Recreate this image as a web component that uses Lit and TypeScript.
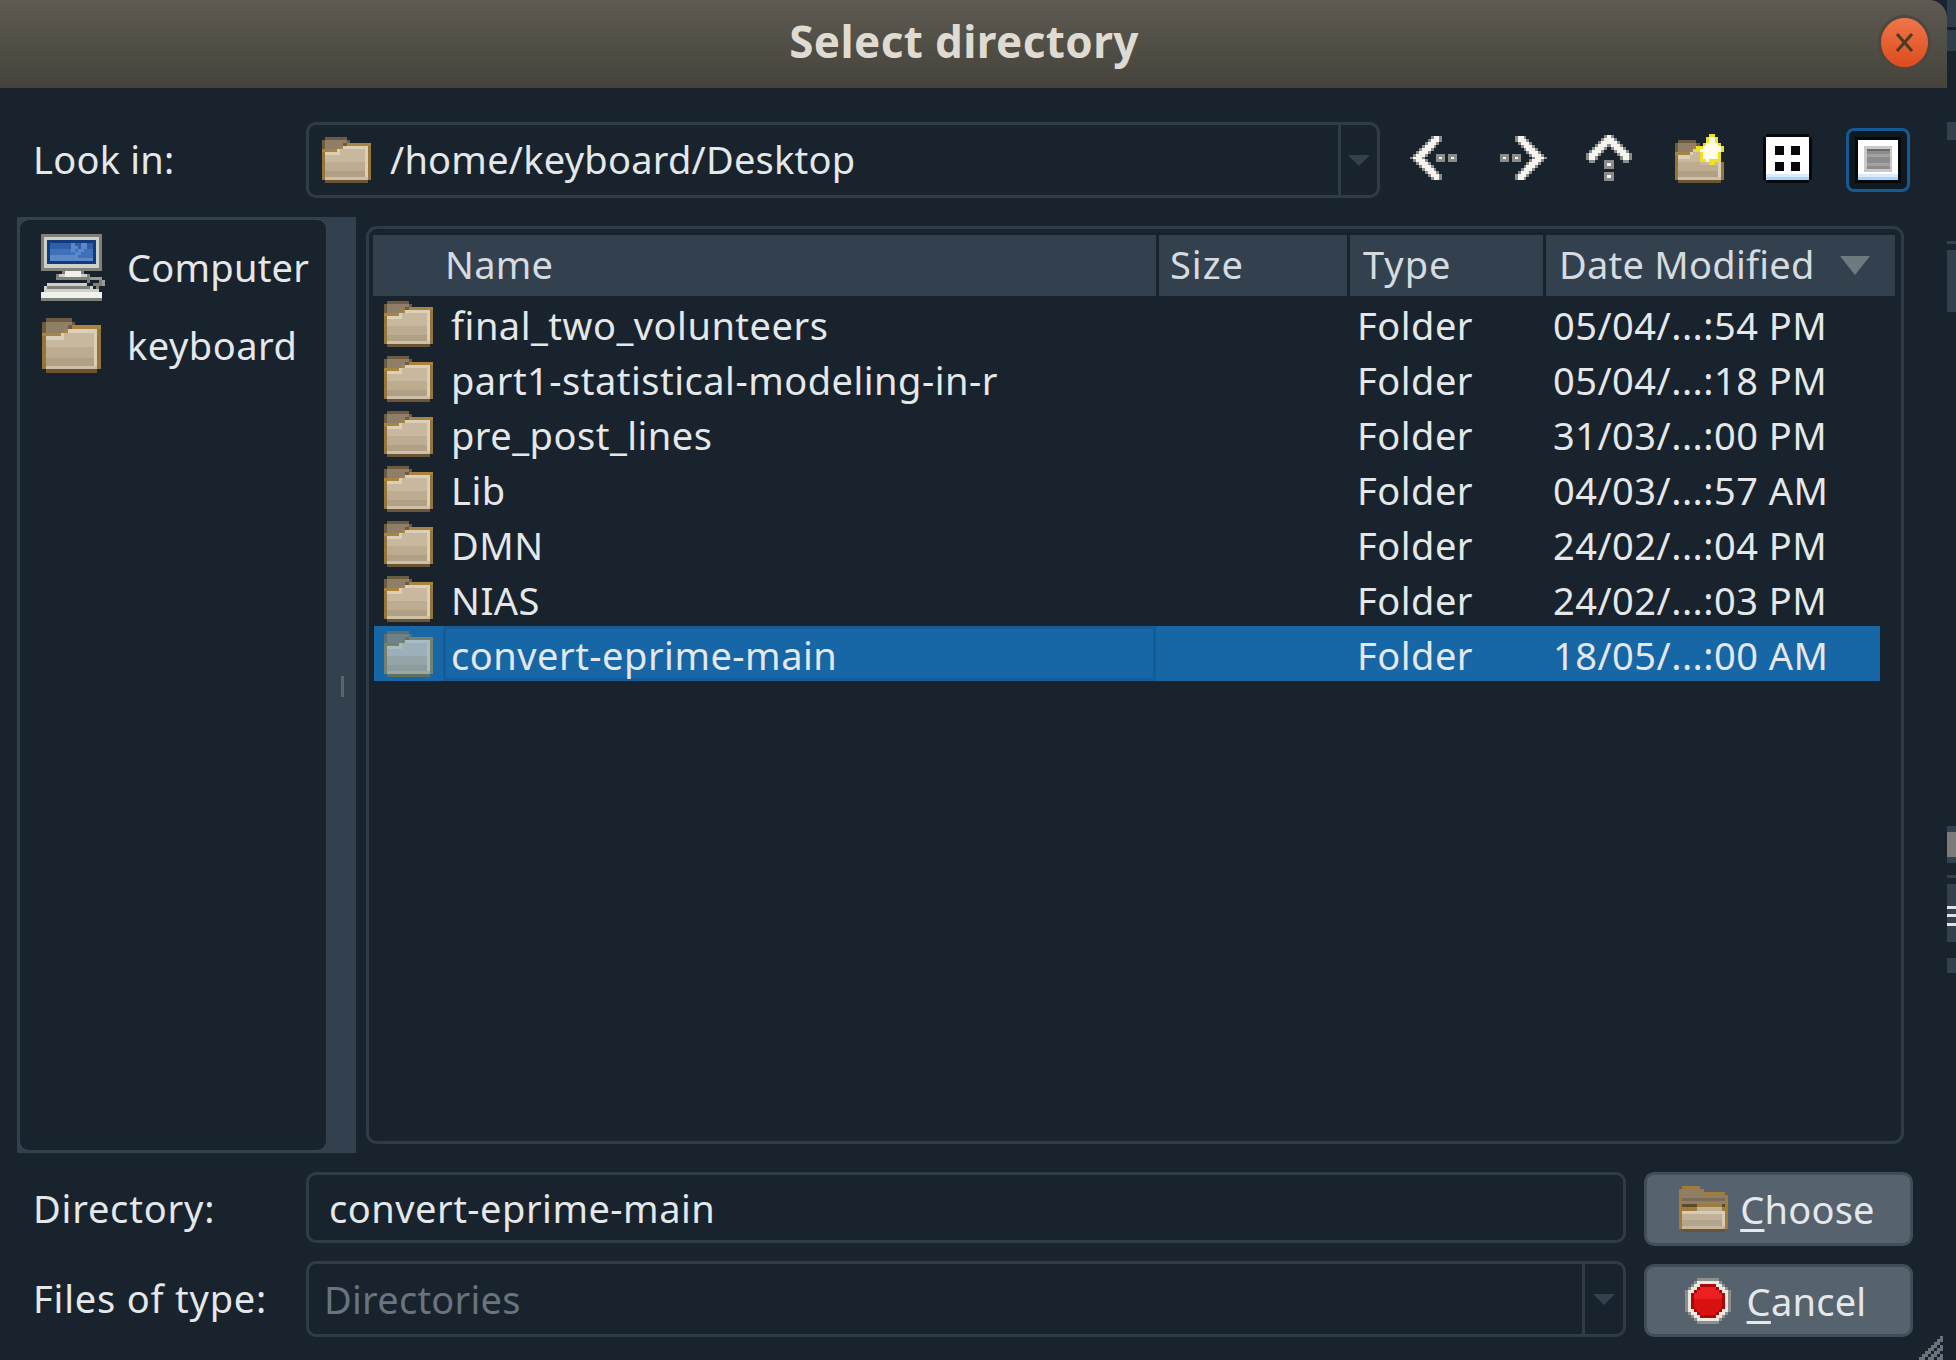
import { LitElement, html, svg, css } from 'lit';
import { customElement } from 'lit/decorators.js';

type Palette = Record<string, string>;

// small helper: the reference icons are low-res bitmaps, so draw them from char maps
function pixels(rows: string[], pal: Palette, w: number, h: number) {
   const cols = Math.max(...rows.map((r) => r.length));
   const rects: unknown[] = [];
   rows.forEach((row, y) => {
      let x = 0;
      while (x < row.length) {
         const c = row[x];
         let end = x + 1;
         while (end < row.length && row[end] === c) end++;
         if (pal[c]) {
            rects.push(svg`<rect x=${x} y=${y} width=${end - x} height="1" fill=${pal[c]}></rect>`);
         }
         x = end;
      }
   });
   return html`<svg class="icon" width=${w} height=${h} viewBox="0 0 ${cols} ${rows.length}" shape-rendering="crispEdges">${rects}</svg>`;
}

const FOLDER = [
   '.aaaaaaa........',
   'abbbbbbba.......',
   'abbbbbbacccccccc',
   'abbbbbcddddddddj',
   'cccccdeeeeeeeedj',
   'jdddddeeeeeeeedj',
   'jeeeeeeeeeeeeedj',
   'jeeeeeeeeeeeeedj',
   'jfffffffffffffdj',
   'jfffffffffffffdj',
   'jfffffffffffffdj',
   'jgggggggggggggdj',
   'jgggggggggggggdj',
   'jhhhhhhhhhhhhhhj',
   '.kkkkkkkkkkkkkk.',
];
const FOLDER_PAL: Palette = {
   a: '#6e5c40', b: '#8f7f68', c: '#a8843f', d: '#dbcfba', e: '#c8b89d', f: '#bdac90',
   g: '#b1a083', h: '#cdc0aa', j: '#94763a', k: '#6b5533',
};
const FOLDER_SEL: Palette = {
   a: '#5a7078', b: '#6f8288', c: '#76806e', d: '#a8bcc5', e: '#9db0b8', f: '#93a5a9',
   g: '#8c9c9c', h: '#9aa8a8', j: '#76806e', k: '#60705f',
};

const FOLDER_OPEN = [
   '.cccccc.........',
   'cbbbbbbc........',
   'cbbbbbbbccccccc.',
   'cbbbbbbbbbbbbbbc',
   'cmmmmmmmmmmmmmmc',
   'cbbbbbbbbbbbbbbc',
   'cnnnnnccccccccnc',
   'cccccceeeeeeeecc',
   'cddddddddddddddc',
   'ceeeeeeeeeeeeedc',
   'ceeeeeeeeeeeeedc',
   'cfffffffffffffdc',
   'cfffffffffffffdc',
   'chhhhhhhhhhhhhhc',
   '.kkkkkkkkkkkkkk.',
];
const OPEN_PAL: Palette = {
   b: '#8f7f68', m: '#7a6b52', n: '#5c4a2e', c: '#a07c3a', d: '#d8ccb8', e: '#c0b198', f: '#b3a58c',
   h: '#c4b8a2', k: '#6b5533',
};

const COMPUTER = [
   'kkkkkkkkkkkkkkkkkkkk.',
   'kssssssssssssssssssk.',
   'ksnnnnnnnnnnnnnnnnsk.',
   'ksnbbbbbbblbbllbbnsk.',
   'ksnbbbbbbbllbllbbnsk.',
   'ksnmmmmmmmlmllmmmnsk.',
   'ksnmmmmmmmmllmmmmnsk.',
   'ksnlllllllllmmmmmnsk.',
   'ksnllllllllllllllnsk.',
   'ksnnnnnnnnnnnnnnnnsk.',
   'kssssssssssssssssssk.',
   'kkkkkkkkkkkkkkkkkkkk.',
   '.......kwwwwwk.......',
   '.....ksswwwwwssk.....',
   '.....kkkkkkkkkkkoooo.',
   '...............k...ko',
   '..sssssssssssss..kkko',
   '.skkkkkkkkkkkkkks.k..',
   '.ssssssssssssssssss..',
   'wwwwwwwwwwwwwwwwwwww.',
   'wwwwwwwwwwwwwwwwwwww.',
   'kkkkkkkkkkkkkkkkkkkk.',
];
const COMPUTER_PAL: Palette = {
   k: '#80807a', s: '#d0d0ca', n: '#123a7c', b: '#2f5fa8', m: '#3f70b8', l: '#5a88c8',
   w: '#f0f0ec', o: '#9a9a94',
};

const BACK = [
   '.......gwwg.....',
   '......gwwwg.....',
   '.....gwwwg......',
   '....gwwwg.......',
   '...gwwwg........',
   '..gwwwg.........',
   '.gwwwg...ggg.ggg',
   'gwwwg....gwg.gwg',
   '.gwwwg...ggg.ggg',
   '..gwwwg.........',
   '...gwwwg........',
   '....gwwwg.......',
   '.....gwwwg......',
   '......gwwwg.....',
   '.......gwwg.....',
];
const FORWARD = BACK.map((r) => r.split('').reverse().join(''));
const UP = [
   '......gwg......',
   '.....gwwwg.....',
   '....gwwwwwg....',
   '...gwwwgwwwg...',
   '..gwwwg.gwwwg..',
   '.gwwwg...gwwwg.',
   'gwwwg.....gwwwg',
   'gwwg.......gwwg',
   '.gg...ggg...gg.',
   '......gwg......',
   '......ggg......',
   '...............',
   '......ggg......',
   '......gwg......',
   '......ggg......',
];
const ARROW_PAL: Palette = { w: '#f6f4ef', g: '#8b8c8a' };

const NEW_FOLDER = [
   '...........yy...',
   '..........yWWy..',
   '.aaaaaa...yWWy..',
   'abbbbbba.yWWWWy.',
   'abbbbbcyyWWWWWWy',
   'abbbbcdyWWWWWWWy',
   'cccccdeeyWWWWWy.',
   'jddddeeeyWWWWWy.',
   'jeeeeeeeyyWyyyy.',
   'jfffffffeeeyyedj',
   'jfffffffffffffdj',
   'jfffffffffffffdj',
   'jgggggggggggggdj',
   'jgggggggggggggdj',
   'jhhhhhhhhhhhhhhj',
   '.kkkkkkkkkkkkkk.',
];
const NEW_PAL: Palette = { ...FOLDER_PAL, y: '#f2df22', W: '#fffde8' };

const GRID_VIEW = [
   '.KKKKKKKKKKKKKK.',
   'KWWWWWWWWWWWWWWK',
   'KWWWWWWWWWWWWWWK',
   'KWWWWWWWWWWWWWWK',
   'KWWWKKKWWKKKWWWK',
   'KWWWKKKWWKKKWWWK',
   'KWWWKKKWWKKKWWWK',
   'KWWWWWWWWWWWWWWK',
   'KWWWWWWWWWWWWWWK',
   'KWWWKKKWWKKKWWWK',
   'KWWWKKKWWKKKWWWK',
   'KWWWKKKWWKKKWWWK',
   'KWWWWWWWWWWWWWWK',
   'KbbbbbbbbbbbbbbK',
   'KBBBBBBBBBBBBBBK',
   '.KKKKKKKKKKKKKK.',
];
const VIEW_PAL: Palette = {
   K: '#06090c', W: '#ffffff', b: '#d9ecfd', B: '#a9d5fb', g: '#c9c9c9', p: '#6a6a6a', q: '#8c8c8c', r: '#a2a2a2',
};
const DETAIL_VIEW = [
   'KKKKKKKKKKKKKKKK',
   'KWWWWWWWWWWWWWWK',
   'KWWWWWWWWWWWWWWK',
   'KWWggggggggggWWK',
   'KWWgppppppppgWWK',
   'KWWgqqqqqqqqgWWK',
   'KWWgrrrrrrrrgWWK',
   'KWWgqqqqqqqqgWWK',
   'KWWgqqqqqqqqgWWK',
   'KWWgrrrrrrrrgWWK',
   'KWWgqqqqqqqqgWWK',
   'KWWggggggggggWWK',
   'KWWWWWWWWWWWWWWK',
   'KbbbbbbbbbbbbbbK',
   'KBBBBBBBBBBBBBBK',
   'KKKKKKKKKKKKKKKK',
];

const STOP = [
   '....ggggggg....',
   '...gwwwwwwwg...',
   '..gwwdddddwwg..',
   '.gwwdRRRRRdwwg.',
   'gwwdRRRRRRRdwwg',
   'gwdRRRRRRRRRdwg',
   'gwdRRRRRRRRRdwg',
   'gwdrrrrrrrrrdwg',
   'gwdrrrrrrrrrdwg',
   'gwdrrrrrrrrrdwg',
   'gwwdrrrrrrrdwwg',
   '.gwwdrrrrrdwwg.',
   '..gwwdddddwwg..',
   '...gwwwwwwwg...',
   '....ggggggg....',
];
const STOP_PAL: Palette = { g: '#8f8f8a', w: '#ece8e6', d: '#a80808', R: '#ec2020', r: '#d81010' };

const GRIP = [
   '.......g',
   '......gg',
   '.....gg.',
   '....gg.g',
   '...gg.gg',
   '..gg.gg.',
   '.gg.gg.g',
   'gg.gg.gg',
];

const FILES = [
   { name: 'final_two_volunteers', date: '05/04/...:54 PM' },
   { name: 'part1-statistical-modeling-in-r', date: '05/04/...:18 PM' },
   { name: 'pre_post_lines', date: '31/03/...:00 PM' },
   { name: 'Lib', date: '04/03/...:57 AM' },
   { name: 'DMN', date: '24/02/...:04 PM' },
   { name: 'NIAS', date: '24/02/...:03 PM' },
   { name: 'convert-eprime-main', date: '18/05/...:00 AM', selected: true },
];

// bits of another window peeking out on the right of the dialog: [height, colour]
const A = '#2f3e4b';
const B = '#33404d';
const W = '#dfe3e6';
const STRIP: [number, string | null][] = [
   [27, A], [3, '#14202a'], [21, A], [71, null], [18, B], [101, null], [3, B], [6, null], [62, B],
   [514, null], [6, B], [25, '#7a7a7a'], [6, B], [12, null], [3, B], [6, null], [22, B],
   [3, W], [5, B], [3, W], [6, B], [3, W], [16, B], [16, null], [15, B],
];

@customElement('app-root')
export class AppRoot extends LitElement {
   static styles = css`
   :host {
      display: flex;
      width: 1956px;
      height: 1360px;
      background: #19232d;
      overflow: hidden;
      font-family: 'Noto Sans', sans-serif;
      font-size: 38px;
      letter-spacing: 0.25px;
      color: #e4e8ea;
   }
   .icon {
      display: block;
      flex: none;
   }
   .window {
      width: 1947px;
      height: 1360px;
      position: relative;
      display: flex;
      flex-direction: column;
   }
   .strip {
      width: 9px;
      display: flex;
      flex-direction: column;
   }
   .titlebar {
      height: 88px;
      flex: none;
      padding-right: 19px;
      box-sizing: border-box;
      display: grid;
      grid-template-columns: 1fr auto 1fr;
      align-items: center;
      background: linear-gradient(#5e5a51, #45433b);
      border-top-right-radius: 18px;
   }
   .title {
      grid-column: 2;
      font-weight: 700;
      font-size: 44px;
      line-height: 60px;
      margin-top: -6px;
      color: #dfdbd2;
      letter-spacing: 0.4px;
   }
   .close {
      grid-column: 3;
      justify-self: end;
      width: 47px;
      height: 49px;
      border-radius: 50%;
      background: linear-gradient(#f0754a, #dc4c1e);
      box-shadow: 0 0 0 3px #4c473f;
      display: flex;
      align-items: center;
      justify-content: center;
      margin-top: -3px;
   }
   .lookin {
      display: flex;
      align-items: center;
      height: 76px;
      margin-top: 34px;
      padding-left: 33px;
   }
   .label {
      width: 273px;
      flex: none;
      white-space: nowrap;
      line-height: 50px;
   }
   .lookin .label {
      margin-top: -2px;
   }
   .combo {
      box-sizing: border-box;
      height: 76px;
      border: 3px solid #2f3c48;
      border-radius: 10px;
      display: flex;
      align-items: center;
   }
   .lookin .combo {
      width: 1074px;
   }
   .combo .value {
      flex: 1;
      display: flex;
      align-items: center;
      height: 100%;
      min-width: 0;
   }
   .lookin .value {
      padding-left: 13px;
      gap: 19px;
   }
   .lookin .value span {
      margin-top: -2px;
   }
   .drop {
      width: 38px;
      height: 100%;
      border-left: 3px solid #2f3c48;
      display: flex;
      align-items: center;
      justify-content: center;
   }
   .lookin .drop {
      width: 36px;
   }
   .drop i {
      width: 0;
      height: 0;
      border: 11px solid transparent;
      border-top: 11px solid #33404d;
      border-bottom: 0;
   }
   .toolbar {
      display: flex;
      align-items: center;
      padding-left: 30px;
      height: 100%;
   }
   .toolbar > * {
      margin-top: -4px;
   }
   .frame {
      box-sizing: border-box;
      width: 64px;
      height: 64px;
      border: 3px solid #155a92;
      border-radius: 8px;
      background: #101820;
      display: flex;
      align-items: center;
      justify-content: center;
      margin-top: 0;
   }
   .main {
      display: flex;
      flex: none;
      height: 936px;
      margin-top: 19px;
      padding-left: 17px;
      gap: 10px;
   }
   .side-wrap {
      box-sizing: border-box;
      width: 339px;
      background: #33404d;
      padding: 3px 30px 3px 3px;
      position: relative;
   }
   .side {
      height: 100%;
      box-sizing: border-box;
      background: #19232d;
      border-radius: 9px;
      padding: 12px 0 0 21px;
      display: flex;
      flex-direction: column;
   }
   .side-item {
      display: flex;
      align-items: center;
      gap: 22px;
      height: 71px;
      white-space: nowrap;
   }
   .side-item span {
      margin-top: -2px;
   }
   .side-item.place {
      height: 80px;
      gap: 25px;
      margin-top: 2px;
   }
   .side-item.place span {
      margin-top: 0;
      letter-spacing: 0.5px;
   }
   .handle {
      position: absolute;
      left: 324px;
      top: 459px;
      width: 3px;
      height: 21px;
      background: #5a656e;
   }
   .list {
      box-sizing: border-box;
      width: 1538px;
      height: 918px;
      margin-top: 9px;
      border: 3px solid #2f3c48;
      border-radius: 11px;
      padding: 6px 6px 0 4px;
   }
   .cols {
      display: grid;
      grid-template-columns: 786px 191px 196px 1fr;
      height: 61px;
      column-gap: 0;
   }
   .cols > div {
      background: #33414e;
      display: flex;
      align-items: center;
      margin-right: 3px;
      color: #d5dbe0;
      padding-bottom: 4px;
      box-sizing: border-box;
   }
   .cols > div:last-child {
      margin-right: 0;
      justify-content: space-between;
      padding-right: 25px;
   }
   .cols .c-name { padding-left: 72px; }
   .cols .c-size { padding-left: 11px; letter-spacing: 1px; }
   .cols .c-type { padding-left: 13px; letter-spacing: 1px; }
   .cols .c-date { padding-left: 13px; }
   .sort {
      width: 0;
      height: 0;
      border: 15px solid transparent;
      border-top: 19px solid #6f7a80;
      border-bottom: 0;
      margin-top: 4px;
   }
   .row {
      display: grid;
      grid-template-columns: 69px 713px 201px 196px 1fr;
      width: 1506px;
      height: 55px;
      margin-left: 1px;
      align-items: center;
      letter-spacing: 0.5px;
   }
   .row .ico {
      padding-left: 10px;
   }
   .row .name {
      padding-left: 8px;
      align-self: stretch;
      display: flex;
      align-items: center;
      white-space: nowrap;
   }
   .row .type {
      grid-column: 4;
   }
   .row .name,
   .row .type,
   .row .date {
      padding-top: 2px;
   }
   .row.sel {
      background: #1766a6;
   }
   .row.sel .name {
      box-shadow: inset 0 0 0 3px #155d98;
   }
   .form {
      display: grid;
      grid-template-columns: 273px 1320px 287px;
      column-gap: 0;
      margin-top: 19px;
      padding-left: 33px;
      row-gap: 15px;
   }
   .form .label {
      align-self: center;
      margin-top: -3px;
      letter-spacing: 0.8px;
   }
   .field {
      box-sizing: border-box;
      height: 71px;
      border: 3px solid #2f3c48;
      border-radius: 10px;
      padding-left: 20px;
      display: flex;
      align-items: center;
      align-self: start;
      letter-spacing: 0.5px;
   }
   .form .combo .value {
      padding-left: 15px;
      color: #69747e;
   }
   .btn {
      box-sizing: border-box;
      margin-left: 18px;
      border: 3px solid #414d59;
      border-radius: 10px;
      background: #56626e;
      display: flex;
      align-items: center;
      justify-content: center;
      gap: 12px;
      padding-right: 3px;
   }
   .btn.choose {
      height: 74px;
   }
   .btn.cancel {
      height: 73px;
      margin-top: 3px;
      gap: 16px;
      padding-right: 6px;
   }
   .btn u {
      text-underline-offset: 5px;
      text-decoration-thickness: 3px;
   }
   .grip {
      position: absolute;
      left: 1919px;
      top: 1336px;
   }
   `;

   private renderRow(f: { name: string; date: string; selected?: boolean }) {
      return html`
         <div class="row ${f.selected ? 'sel' : ''}">
            <div class="ico">${pixels(FOLDER, f.selected ? FOLDER_SEL : FOLDER_PAL, 49, 46)}</div>
            <div class="name">${f.name}</div>
            <div class="type">Folder</div>
            <div class="date">${f.date}</div>
         </div>
      `;
   }

   render() {
      return html`
         <div class="window">
            <div class="titlebar">
               <div class="title">Select directory</div>
               <div class="close">
                  <svg width="19" height="21" viewBox="0 0 19 21">
                     <path d="M2 2 L17 19 M17 2 L2 19" stroke="#4a3a20" stroke-width="3" fill="none"></path>
                  </svg>
               </div>
            </div>

            <div class="lookin">
               <div class="label">Look in:</div>
               <div class="combo">
                  <div class="value">${pixels(FOLDER, FOLDER_PAL, 49, 46)}<span>/home/keyboard/Desktop</span></div>
                  <div class="drop"><i></i></div>
               </div>
               <div class="toolbar">
                  ${pixels(BACK, ARROW_PAL, 47, 46)}
                  <span style="width:43px"></span>
                  ${pixels(FORWARD, ARROW_PAL, 47, 46)}
                  <span style="width:39px"></span>
                  ${pixels(UP, ARROW_PAL, 46, 46)}
                  <span style="width:43px"></span>
                  ${pixels(NEW_FOLDER, NEW_PAL, 49, 49)}
                  <span style="width:39px"></span>
                  ${pixels(GRID_VIEW, VIEW_PAL, 49, 49)}
                  <span style="width:34px"></span>
                  <div class="frame">${pixels(DETAIL_VIEW, VIEW_PAL, 48, 46)}</div>
               </div>
            </div>

            <div class="main">
               <div class="side-wrap">
                  <div class="side">
                     <div class="side-item">${pixels(COMPUTER, COMPUTER_PAL, 64, 67)}<span>Computer</span></div>
                     <div class="side-item place">${pixels(FOLDER, FOLDER_PAL, 61, 55)}<span>keyboard</span></div>
                  </div>
                  <div class="handle"></div>
               </div>
               <div class="list">
                  <div class="cols">
                     <div class="c-name">Name</div>
                     <div class="c-size">Size</div>
                     <div class="c-type">Type</div>
                     <div class="c-date"><span>Date Modified</span><i class="sort"></i></div>
                  </div>
                  ${FILES.map((f) => this.renderRow(f))}
               </div>
            </div>

            <div class="form">
               <div class="label">Directory:</div>
               <div class="field">convert-eprime-main</div>
               <div class="btn choose">${pixels(FOLDER_OPEN, OPEN_PAL, 49, 46)}<span><u>C</u>hoose</span></div>

               <div class="label">Files of type:</div>
               <div class="combo">
                  <div class="value">Directories</div>
                  <div class="drop"><i></i></div>
               </div>
               <div class="btn cancel">${pixels(STOP, STOP_PAL, 46, 46)}<span><u>C</u>ancel</span></div>
            </div>

            <div class="grip">${pixels(GRIP, { g: '#6a737a' }, 24, 24)}</div>
         </div>
         <div class="strip">
            ${STRIP.map(([h, c]) => html`<div style="height:${h}px;background:${c ?? 'transparent'}"></div>`)}
         </div>
      `;
   }
}
